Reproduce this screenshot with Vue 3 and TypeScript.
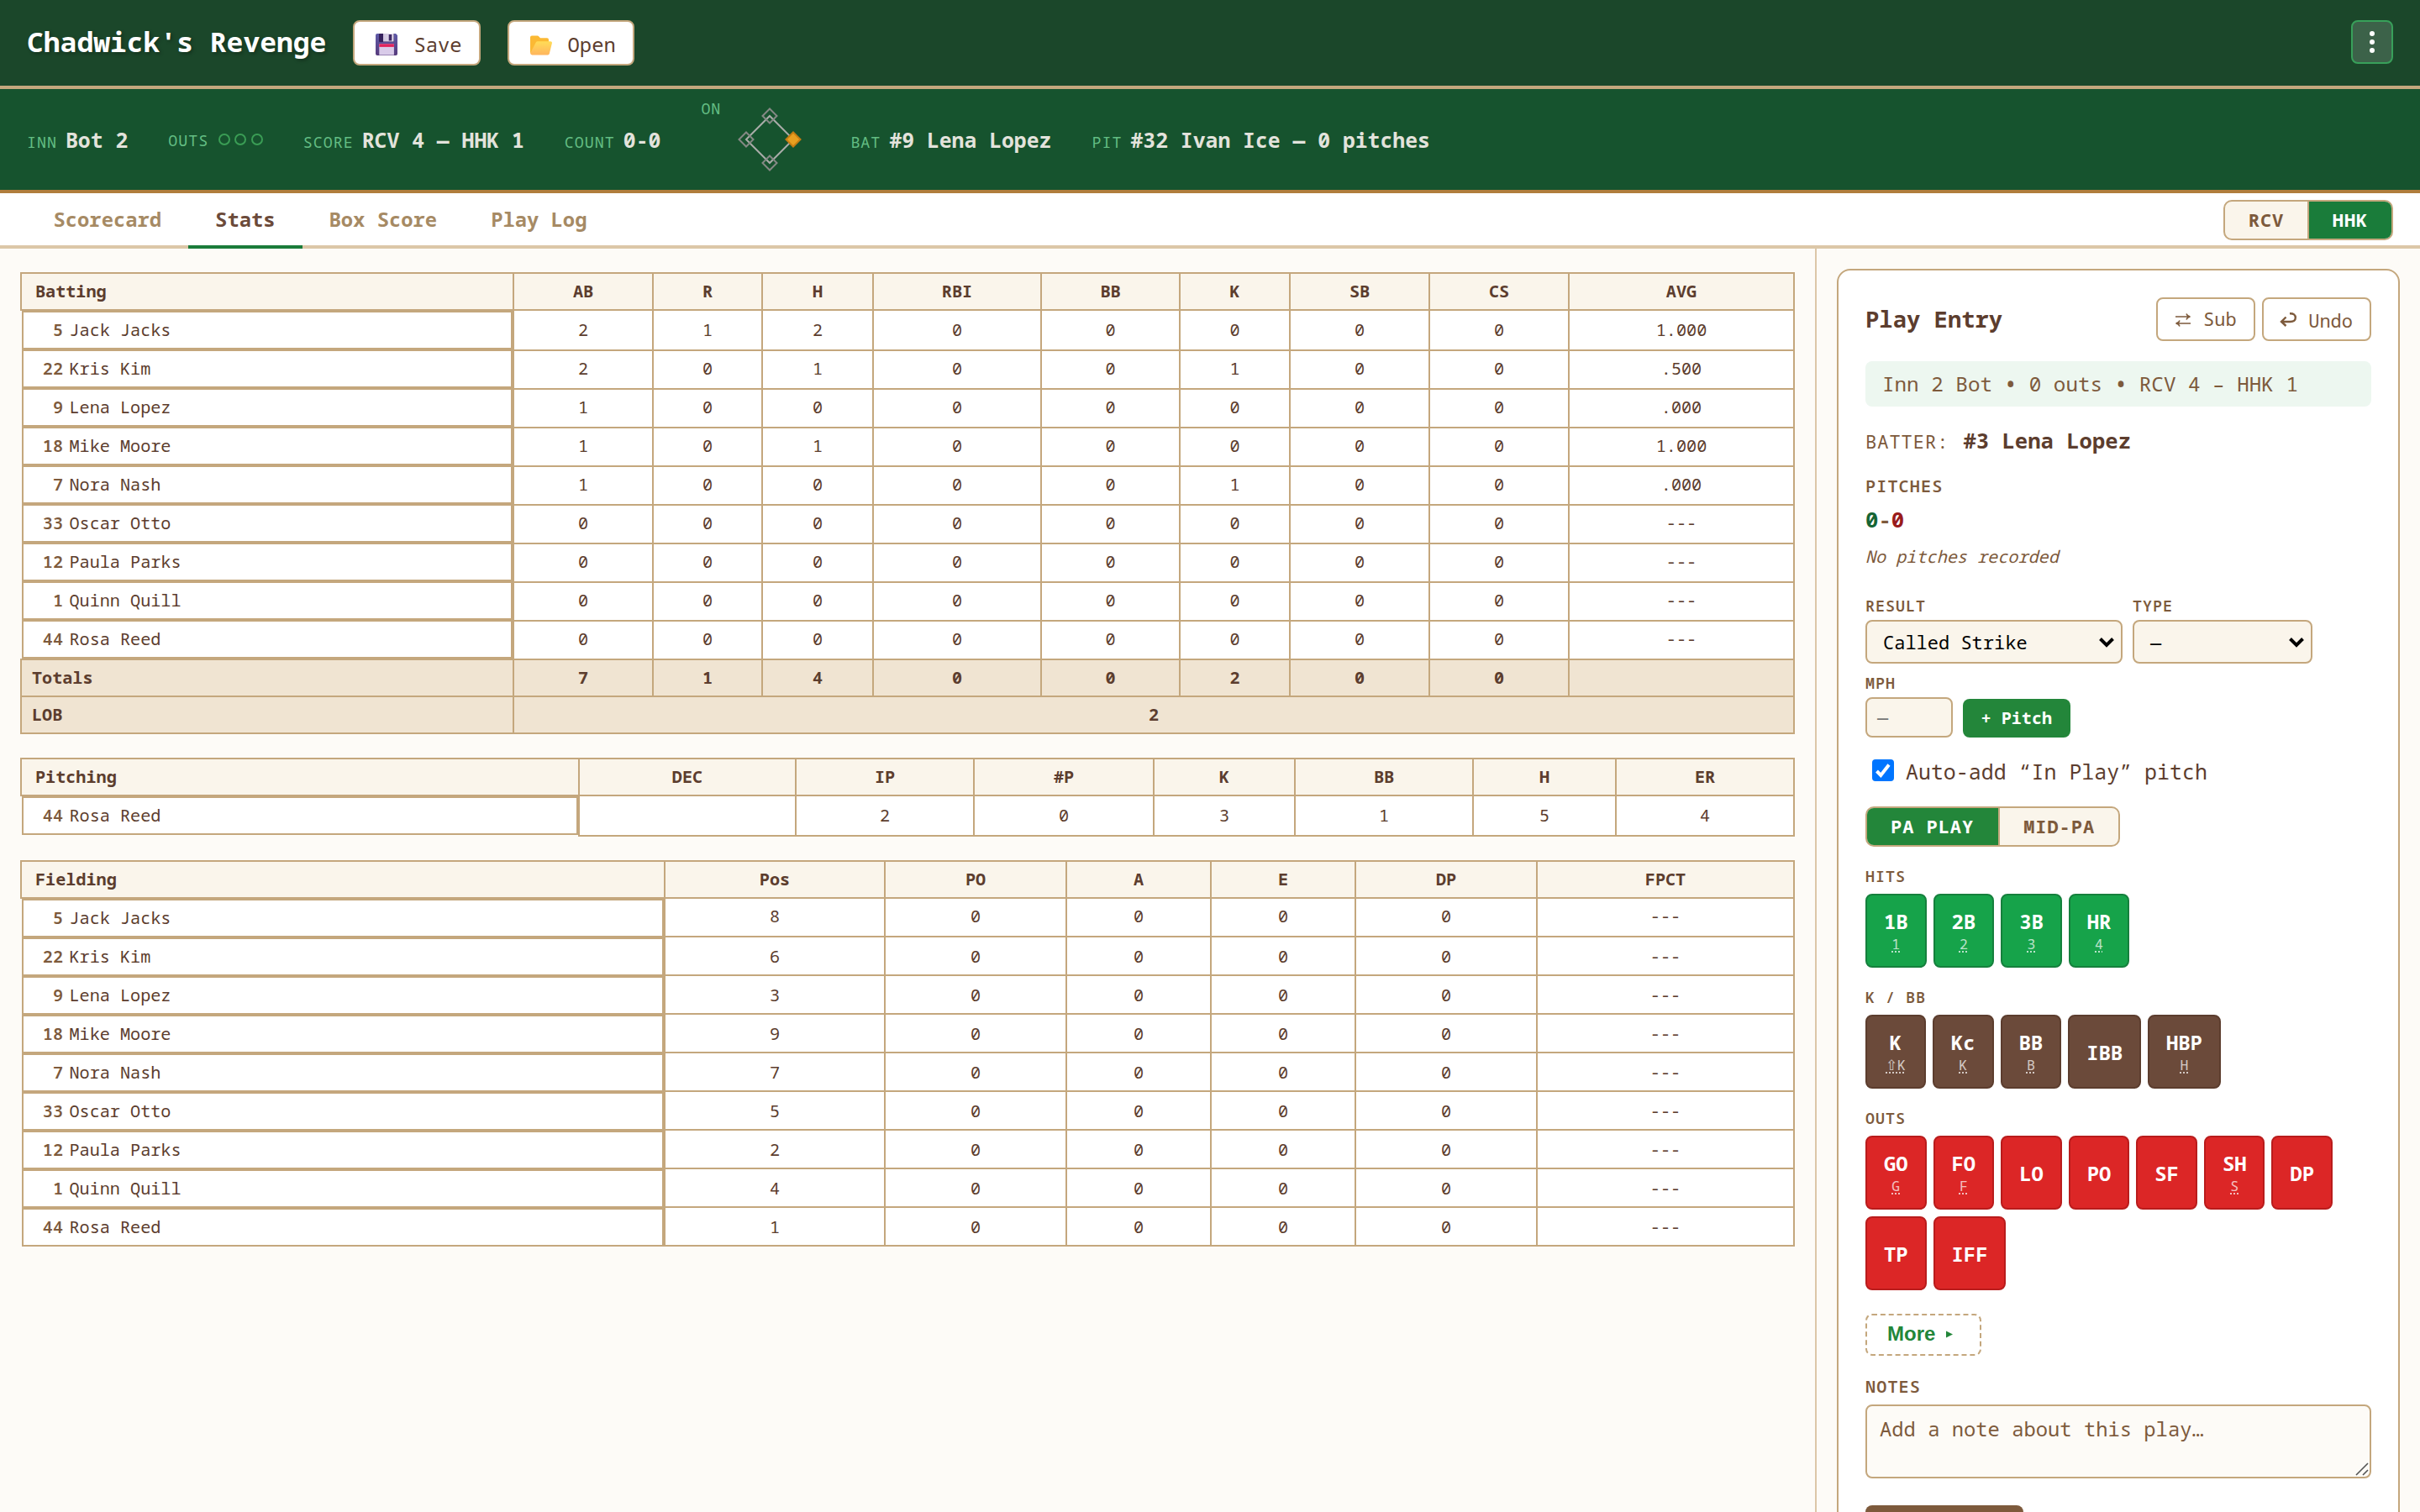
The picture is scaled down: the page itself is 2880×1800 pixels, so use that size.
<script setup lang="ts">
interface Row {
  num: string
  name: string
  cells: string[]
}
interface PlayButton {
  label: string
  key?: string
}
interface PlayGroup {
  title: string
  tone: string
  buttons: PlayButton[]
}

const row = (num: string, name: string, cells: string): Row => ({ num, name, cells: cells.split(' ') })

const battingHead = ['AB', 'R', 'H', 'RBI', 'BB', 'K', 'SB', 'CS', 'AVG']
const batting: Row[] = [
  row('5', 'Jack Jacks', '2 1 2 0 0 0 0 0 1.000'),
  row('22', 'Kris Kim', '2 0 1 0 0 1 0 0 .500'),
  row('9', 'Lena Lopez', '1 0 0 0 0 0 0 0 .000'),
  row('18', 'Mike Moore', '1 0 1 0 0 0 0 0 1.000'),
  row('7', 'Nora Nash', '1 0 0 0 0 1 0 0 .000'),
  row('33', 'Oscar Otto', '0 0 0 0 0 0 0 0 ---'),
  row('12', 'Paula Parks', '0 0 0 0 0 0 0 0 ---'),
  row('1', 'Quinn Quill', '0 0 0 0 0 0 0 0 ---'),
  row('44', 'Rosa Reed', '0 0 0 0 0 0 0 0 ---'),
]
const totals = ['7', '1', '4', '0', '0', '2', '0', '0', '']

const pitchingHead = ['DEC', 'IP', '#P', 'K', 'BB', 'H', 'ER']
const pitching: Row[] = [{ num: '44', name: 'Rosa Reed', cells: ['', '2', '0', '3', '1', '5', '4'] }]

const fieldingHead = ['Pos', 'PO', 'A', 'E', 'DP', 'FPCT']
const positions = ['8', '6', '3', '9', '7', '5', '2', '4', '1']
const fielding: Row[] = batting.map((b, i) => row(b.num, b.name, `${positions[i]} 0 0 0 0 ---`))

const groups: PlayGroup[] = [
  {
    title: 'HITS',
    tone: 'hit',
    buttons: [
      { label: '1B', key: '1' },
      { label: '2B', key: '2' },
      { label: '3B', key: '3' },
      { label: 'HR', key: '4' },
    ],
  },
  {
    title: 'K / BB',
    tone: 'walk',
    buttons: [
      { label: 'K', key: '⇧K' },
      { label: 'Kc', key: 'K' },
      { label: 'BB', key: 'B' },
      { label: 'IBB' },
      { label: 'HBP', key: 'H' },
    ],
  },
  {
    title: 'OUTS',
    tone: 'out',
    buttons: [
      { label: 'GO', key: 'G' },
      { label: 'FO', key: 'F' },
      { label: 'LO' },
      { label: 'PO' },
      { label: 'SF' },
      { label: 'SH', key: 'S' },
      { label: 'DP' },
      { label: 'TP' },
      { label: 'IFF' },
    ],
  },
]
const tabs = ['Scorecard', 'Stats', 'Box Score', 'Play Log']
</script>

<template>
  <div class="app">
    <header class="top">
      <h1>Chadwick's Revenge</h1>
      <button class="file-btn">
        <svg class="floppy" viewBox="0 0 26 26">
          <defs>
            <linearGradient id="fl" x1="0" y1="0" x2="0" y2="1">
              <stop offset="0" stop-color="#5f5ba8" />
              <stop offset="1" stop-color="#563a7c" />
            </linearGradient>
            <linearGradient id="fm" x1="0" y1="0" x2="1" y2="0">
              <stop offset="0" stop-color="#cfc4de" />
              <stop offset="1" stop-color="#e9e2f2" />
            </linearGradient>
          </defs>
          <path d="M2 0H24L26 2V24a2 2 0 0 1-2 2H2a2 2 0 0 1-2-2V2a2 2 0 0 1 2-2z" fill="url(#fl)" />
          <rect x="4" y="0" width="18" height="10" rx="1" fill="#35215c" />
          <rect x="9" y="0" width="12.5" height="9.5" fill="url(#fm)" />
          <rect x="15.7" y="1" width="3.6" height="7.5" fill="#3f2a66" />
          <rect x="4.3" y="12.3" width="17.6" height="13.2" fill="#d9cbe9" />
          <rect x="4.3" y="12.3" width="17.6" height="3.6" fill="#e0245e" />
        </svg>
        <span>Save</span>
      </button>
      <button class="file-btn">
        <svg class="folder" viewBox="0 0 26 24">
          <defs>
            <linearGradient id="fo" x1="0" y1="0" x2="0" y2="1">
              <stop offset="0" stop-color="#ffdc57" />
              <stop offset="1" stop-color="#ffb55e" />
            </linearGradient>
          </defs>
          <path d="M0 2.5A2 2 0 0 1 2 .5H8.6a2 2 0 0 1 1.5.7L12 3.2H20a2 2 0 0 1 2 2V14L4 22H2a2 2 0 0 1-2-2z" fill="#fbb934" />
          <path d="M6.6 8.8A2 2 0 0 1 8.500 7.300H24a1.900 1.900 0 0 1 1.900 2.300L22.800 21.900A2 2 0 0 1 20.900 23.400H2.200A2.100 2.100 0 0 1 .3 21z" fill="url(#fo)" />
        </svg>
        <span>Open</span>
      </button>
      <button class="menu"><i></i><i></i><i></i></button>
    </header>

    <section class="status">
      <div class="item"><span class="lbl">INN</span><b>Bot 2</b></div>
      <div class="item outs">
        <span class="lbl">OUTS</span>
        <span class="dots"><i></i><i></i><i></i></span>
      </div>
      <div class="item"><span class="lbl">SCORE</span><b>RCV 4 — HHK 1</b></div>
      <div class="item"><span class="lbl">COUNT</span><b>0-0</b></div>
      <div class="item bases">
        <span class="lbl">ON</span>
        <svg width="96" height="96" viewBox="-48 -48 96 96" fill="none" stroke-width="2">
          <path d="M0-28L28 0L0 28L-28 0z" stroke="#a9aca9" />
          <path d="M0-36.500L8.500-28L0-19.500L-8.500-28z" stroke="#858985" />
          <path d="M-28-8.500L-19.500 0L-28 8.500L-36.500 0z" stroke="#858985" />
          <path d="M0 19.500L8.500 28L0 36.500L-8.500 28z" stroke="#858985" />
          <path d="M28-8.500L36.500 0L28 8.500L19.500 0z" fill="#e8a020" stroke="#c77d12" />
        </svg>
      </div>
      <div class="item"><span class="lbl">BAT</span><b>#9 Lena Lopez</b></div>
      <div class="item"><span class="lbl">PIT</span><b>#32 Ivan Ice — 0 pitches</b></div>
    </section>

    <nav class="tabs">
      <a v-for="t in tabs" :key="t" :class="{ active: t === 'Stats' }">{{ t }}</a>
      <div class="seg team"><span>RCV</span><span class="on">HHK</span></div>
    </nav>

    <main>
      <section class="stats">
        <table class="batting">
          <thead>
            <tr>
              <th>Batting</th>
              <th v-for="h in battingHead" :key="h">{{ h }}</th>
            </tr>
          </thead>
          <tbody>
            <tr v-for="r in batting" :key="r.num">
              <td class="player"><div><b>{{ r.num }}</b>{{ r.name }}</div></td>
              <td v-for="(c, i) in r.cells" :key="i">{{ c }}</td>
            </tr>
          </tbody>
          <tfoot>
            <tr>
              <th>Totals</th>
              <th v-for="(c, i) in totals" :key="i">{{ c }}</th>
            </tr>
            <tr class="lob">
              <th>LOB</th>
              <th>2</th>
            </tr>
          </tfoot>
        </table>

        <table class="pitching">
          <thead>
            <tr>
              <th>Pitching</th>
              <th v-for="h in pitchingHead" :key="h">{{ h }}</th>
            </tr>
          </thead>
          <tbody>
            <tr v-for="r in pitching" :key="r.num">
              <td class="player"><div><b>{{ r.num }}</b>{{ r.name }}</div></td>
              <td v-for="(c, i) in r.cells" :key="i">{{ c }}</td>
            </tr>
          </tbody>
        </table>

        <table class="fielding">
          <thead>
            <tr>
              <th>Fielding</th>
              <th v-for="h in fieldingHead" :key="h">{{ h }}</th>
            </tr>
          </thead>
          <tbody>
            <tr v-for="r in fielding" :key="r.num">
              <td class="player"><div><b>{{ r.num }}</b>{{ r.name }}</div></td>
              <td v-for="(c, i) in r.cells" :key="i">{{ c }}</td>
            </tr>
          </tbody>
        </table>
      </section>

      <aside>
        <div class="card">
          <div class="card-head">
            <h2>Play Entry</h2>
            <button class="ghost sub">
              <svg width="20" height="16" viewBox="0 0 20 16" fill="none" stroke="currentColor" stroke-width="1.500">
                <path d="M1 4H18M14 .5Q15 3.500 18.500 4Q15 4.500 14 7.500M19 12H2M6 8.500Q5 11.500 1.500 12Q5 12.500 6 15.500" />
              </svg>
              <span>Sub</span>
            </button>
            <button class="ghost undo">
              <svg width="21" height="17" viewBox="0 0 21 17" fill="none" stroke="currentColor" stroke-width="2.400">
                <path d="M12 1.300Q18.800 1 18.800 6.300Q18.800 11 12.500 11H2M7.500 5.500L2 11L7.500 16" />
              </svg>
              <span>Undo</span>
            </button>
          </div>
          <div class="situation">Inn 2 Bot <b>•</b> 0 outs <b>•</b> RCV 4 – HHK 1</div>
          <div class="batter"><span>BATTER:</span><b>#3 Lena Lopez</b></div>
          <div class="heading pitches">PITCHES</div>
          <div class="count"><span class="balls">0</span>-<span class="strikes">0</span></div>
          <div class="empty">No pitches recorded</div>
          <div class="fields">
            <div class="field">
              <label>RESULT</label>
              <div class="select result">
                Called Strike
                <svg width="20" height="14" viewBox="0 0 20 14"><path d="M2.500 2.500L10 10L17.500 2.500" fill="none" stroke="#000" stroke-width="4" /></svg>
              </div>
            </div>
            <div class="field">
              <label>TYPE</label>
              <div class="select type">
                —
                <svg width="20" height="14" viewBox="0 0 20 14"><path d="M2.500 2.500L10 10L17.500 2.500" fill="none" stroke="#000" stroke-width="4" /></svg>
              </div>
            </div>
          </div>
          <div class="fields second">
            <div class="field">
              <label>MPH</label>
              <div class="mph">—</div>
            </div>
            <button class="add">+ Pitch</button>
          </div>
          <div class="auto">
            <span class="check">
              <svg width="26" height="26" viewBox="0 0 26 26"><path d="M5.500 14L10.300 19L20 6.500" fill="none" stroke="#fff" stroke-width="4" /></svg>
            </span>
            <span>Auto-add “In Play” pitch</span>
          </div>
          <div class="seg mode"><span class="on">PA PLAY</span><span>MID-PA</span></div>

          <div v-for="g in groups" :key="g.title" class="group" :class="g.tone">
            <div class="group-title">{{ g.title }}</div>
            <div class="buttons">
              <button v-for="b in g.buttons" :key="b.label">
                <b>{{ b.label }}</b>
                <span v-if="b.key" class="key">{{ b.key }}</span>
              </button>
            </div>
          </div>

          <button class="more">More<svg width="8" height="9" viewBox="0 0 8 9"><path d="M0 .5L8 4.500L0 8.500z" fill="currentColor" /></svg></button>
          <div class="heading notes">NOTES</div>
          <div class="note">
            Add a note about this play…
            <svg width="16" height="16" viewBox="0 0 16 16"><path d="M1 15L15 1M9 15L15 9" fill="none" stroke="#555" stroke-width="1.600" /></svg>
          </div>
          <div class="submit"></div>
        </div>
      </aside>
    </main>
  </div>
</template>

<style>
body {
  margin: 0;
  background: #fdfbf7;
}
</style>

<style scoped>
* {
  box-sizing: border-box;
}
.app {
  width: 2880px;
  height: 1800px;
  overflow: hidden;
  background: #fdfbf7;
  color: #5c3d2e;
  font-family: 'Noto Sans Mono', 'DejaVu Sans Mono', monospace;
  display: flex;
  flex-direction: column;
}
button {
  font: inherit;
  color: inherit;
  margin: 0;
  padding: 0;
}
h1,
h2 {
  margin: 0;
}

/* header */
.top {
  flex: none;
  height: 106px;
  border-bottom: 4px solid #c4a77d;
  background: #1b472a;
  display: flex;
  align-items: center;
  gap: 32px;
  padding: 0 32px;
}
.top h1 {
  font-size: 33px;
  line-height: 44px;
  padding-bottom: 3px;
  color: #fff;
  text-shadow: 2px 2px 4px rgba(0, 0, 0, 0.3);
  white-space: pre;
}
.file-btn {
  height: 54px;
  border: 2px solid #c4a77d;
  border-radius: 8px;
  background: #fff;
  font-size: 23.82px;
  line-height: 34px;
  padding: 4px 20px 0;
  display: flex;
  align-items: center;
}
.file-btn svg {
  width: 26px;
  height: 26px;
  margin: 0 19px 0 5px;
}
.file-btn .folder {
  margin-top: 2px;
}
.menu {
  margin: 0 0 2px auto;
  width: 50px;
  height: 52px;
  border: 2px solid #38a05a;
  border-radius: 8px;
  background: rgba(255, 255, 255, 0.15);
  display: flex;
  flex-direction: column;
  align-items: center;
  justify-content: center;
  gap: 4px;
}
.menu i {
  width: 6px;
  height: 6px;
  border-radius: 50%;
  background: #fff;
}

/* status bar */
.status {
  flex: none;
  height: 124px;
  border-bottom: 4px solid #b07d3c;
  background: #16532e;
  display: flex;
  align-items: center;
  gap: 48px;
  padding: 0 32px;
}
.item {
  display: flex;
  align-items: baseline;
  gap: 10px;
  padding-top: 1px;
  white-space: pre;
}
.item b {
  font-size: 24.75px;
  line-height: 31px;
  color: #e3e3dc;
}
.lbl {
  font-size: 18.33px;
  line-height: 21px;
  letter-spacing: 1px;
  color: #63bd83;
}
.item.outs {
  align-items: center;
}
.dots {
  display: flex;
  gap: 5.500px;
  margin: 0 0 1px 1.500px;
}
.dots i {
  width: 14px;
  height: 14px;
  border: 2px solid #3a9d55;
  border-radius: 50%;
}
.item.bases {
  align-items: flex-start;
  padding: 0;
}

/* tabs */
.tabs {
  flex: none;
  height: 66px;
  border-bottom: 4px solid #dcc7a8;
  background: #fff;
  display: flex;
  padding: 0 32px 0 31.500px;
}
.tabs a {
  height: 66px;
  padding: 14px 32px;
  font-size: 23.82px;
  line-height: 34px;
  font-weight: 700;
  color: #a68a64;
  border-bottom: 4px solid transparent;
}
.tabs a.active {
  color: #6b4a3a;
  border-color: #1a7c3a;
}
.seg {
  display: flex;
  width: max-content;
  height: 48px;
  border: 2px solid #c4a77d;
  border-radius: 10px;
  overflow: hidden;
  background: #faf5eb;
  color: #7d5a3c;
  font-size: 22px;
  line-height: 42px;
  font-weight: 700;
  letter-spacing: 0.960px;
}
.seg span {
  padding: 0 28px;
}
.seg span + span {
  border-left: 2px solid #c4a77d;
}
.seg .on {
  background: #23863a;
  color: #fff;
}
.seg.team {
  margin: 8px 0 0 auto;
}
.seg.team span {
  padding: 0 27.750px;
}
.seg.team .on {
  background: #1a7c3a;
}

/* stat tables */
main {
  flex: 1;
  min-height: 0;
  display: flex;
}
.stats {
  width: 2160px;
  padding: 28px 24px;
  display: flex;
  flex-direction: column;
  gap: 28px;
}
table,
thead,
tbody,
tfoot {
  display: block;
}
tr {
  display: grid;
}
.batting tr {
  grid-template-columns: 588px 166px 130px 132px 200px 165px 131px 166px 166px 268px;
}
.pitching tr {
  grid-template-columns: 666px 258px 212px 214px 168px 212px 170px 212px;
}
.fielding tr {
  grid-template-columns: 768px 262px 216px 172px 172px 216px 306px;
}
.batting tr.lob {
  grid-template-columns: 588px 1524px;
}
table {
  width: 2112px;
  font-size: 20.16px;
}
th,
td {
  display: block;
  padding: 0;
  text-align: center;
  border: 0 solid #c4a77d;
  border-right-width: 2px;
  border-bottom-width: 2px;
}
thead tr {
  border-top: 2px solid #c4a77d;
}
th {
  height: 44px;
  line-height: 40px;
  background: #faf5eb;
}
th:first-child {
  text-align: left;
  border-left-width: 2px;
  padding-left: 16px;
}
tfoot th {
  background: #f0e4d2;
}
tfoot th:first-child {
  padding-left: 12px;
}
tfoot tr:first-child {
  margin-top: -2px;
  border-top: 2px solid #c4a77d;
}
td {
  height: 46px;
  line-height: 40px;
  background: #fff;
}
tbody tr:first-child td {
  height: 48px;
  line-height: 44px;
}
td.player {
  background: none;
  border-bottom: 0;
  padding-left: 2px;
}
td.player div {
  height: 46px;
  margin-top: -2px;
  border: 2px solid #c4a77d;
  background: #fff;
  text-align: left;
  line-height: 40px;
  white-space: pre;
  display: flex;
}
tbody tr:first-child td.player div {
  margin-top: 0;
}
td.player b {
  width: 47px;
  margin-right: 7.500px;
  text-align: right;
  font-weight: 600;
  color: #7d5a3c;
}
.fielding tbody tr td:not(.player),
.fielding tbody tr:first-child td {
  height: 46px;
  line-height: 44px;
}
.fielding tbody tr:first-child td:not(.player) {
  line-height: 40px;
}
.fielding td.player div {
  margin-top: 0;
}

/* play entry */
aside {
  width: 720px;
  border-left: 2px solid #dcc7a8;
  padding: 24px;
}
.card {
  height: 1600px;
  border: 2px solid #c4a77d;
  border-radius: 16px;
  background: #fff;
  padding: 32px;
  color: #7d5a3c;
}
.card-head {
  display: flex;
  align-items: center;
  gap: 8px;
}
h2 {
  margin-right: auto;
  font-size: 27.2px;
  line-height: 36px;
  padding-bottom: 1px;
  color: #5c3d2e;
}
.ghost {
  height: 52px;
  border: 2px solid #c4a77d;
  border-radius: 8px;
  background: #fff;
  font-size: 22px;
  line-height: 30px;
  display: flex;
  align-items: center;
  gap: 13px;
  padding: 0 20px 2px;
}
.ghost.sub {
  gap: 14px;
  padding-right: 20.500px;
}
.ghost.sub svg {
  margin-top: 3px;
}
.ghost.undo {
  padding: 2px 20px 0;
}
.ghost.undo svg {
  margin: -1px 0 0 -1px;
}
.situation {
  margin-top: 24px;
  height: 54px;
  line-height: 54px;
  padding: 0 20px;
  border-radius: 8px;
  background: #edf7f0;
  font-size: 24.28px;
  white-space: pre;
}
.batter {
  margin-top: 24px;
  height: 33px;
  display: flex;
  align-items: baseline;
  gap: 17px;
  font-size: 22px;
  letter-spacing: 1px;
}
.batter b {
  font-size: 25.6px;
  line-height: 33px;
  letter-spacing: 0;
  color: #5c3d2e;
}
.heading {
  font-size: 20.16px;
  line-height: 28px;
  font-weight: 600;
  letter-spacing: 1.1px;
}
.pitches {
  margin-top: 23px;
}
.count {
  margin-top: 10px;
  font-size: 25.66px;
  line-height: 33px;
  font-weight: 700;
}
.balls {
  color: #166534;
}
.strikes {
  color: #991b1b;
}
.empty {
  margin-top: 13px;
  font-size: 20.16px;
  line-height: 28px;
  font-style: italic;
}
.fields {
  margin-top: 33px;
  display: flex;
  align-items: flex-end;
  gap: 12px;
}
.fields.second {
  margin-top: 11px;
}
label,
.group-title {
  display: block;
  font-size: 18.33px;
  line-height: 23px;
  font-weight: 600;
  letter-spacing: 1px;
}
.select,
.mph {
  margin-top: 6px;
  border: 2px solid #c4a77d;
  border-radius: 8px;
  background: #faf5eb;
  font-size: 22px;
}
.select {
  height: 52px;
  line-height: 46px;
  padding: 0 7px 0 19px;
  color: #000;
  display: flex;
  align-items: center;
  justify-content: space-between;
}
.result {
  width: 306px;
}
.type {
  width: 214px;
}
.select svg {
  margin-top: 2px;
}
.mph {
  width: 104px;
  height: 48px;
  line-height: 42px;
  padding-left: 12px;
  color: #757575;
}
.add {
  height: 46px;
  padding: 0 21.500px 2px;
  border: 0;
  border-radius: 8px;
  background: #23863a;
  color: #fff;
  font-size: 20.16px;
  font-weight: 700;
}
.auto {
  margin-top: 23px;
  height: 35px;
  display: flex;
  align-items: center;
  gap: 14px;
  padding-left: 8px;
  font-size: 24.93px;
  line-height: 35px;
  color: #5c3d2e;
}
.check {
  width: 26px;
  height: 26px;
  margin-bottom: 3px;
  border-radius: 4px;
  background: #0075ff;
}
.check svg {
  display: block;
}
.seg.mode {
  margin-top: 24px;
}
.seg.mode .on {
  padding: 0 29px 0 28px;
}
.group {
  margin-top: 23px;
}
.buttons {
  margin-top: 10px;
  display: flex;
  flex-wrap: wrap;
  gap: 8px;
}
.buttons button {
  min-width: 72px;
  height: 88px;
  border: 2px solid;
  border-radius: 8px;
  padding: 2px 20px 0;
  color: #fff;
  display: flex;
  flex-direction: column;
  align-items: center;
  justify-content: center;
}
.buttons b {
  font-size: 23.82px;
  line-height: 30px;
}
.key {
  margin: 1px 0 2px;
  height: 21px;
  font-family: 'Noto Sans Mono', serif;
  font-size: 16.5px;
  line-height: 21px;
  opacity: 0.7;
  text-decoration: underline dotted 2px;
  text-underline-offset: 2px;
  text-decoration-skip-ink: none;
}
.hit button {
  background: #16a34a;
  border-color: #15803d;
}
.walk button {
  background: #6b4a3a;
  border-color: #5c3d2e;
}
.out button {
  background: #dc2626;
  border-color: #b91c1c;
}
.more {
  margin-top: 28px;
  width: 138px;
  height: 50px;
  border: 2px dashed #c4a77d;
  border-radius: 8px;
  background: #fff;
  color: #23863a;
  font: 700 24px/30px 'Liberation Sans', sans-serif;
  display: flex;
  align-items: center;
  gap: 13px;
  padding: 0 0 3px 24px;
}
.more svg {
  margin-top: 1px;
}
.notes {
  margin-top: 22px;
}
.note {
  position: relative;
  margin-top: 8px;
  height: 88px;
  border: 2px solid #c4a77d;
  border-radius: 8px;
  background: #fdfbf7;
  padding: 10px 15px;
  font-size: 23.82px;
  line-height: 34px;
}
.note svg {
  position: absolute;
  right: 1px;
  bottom: 1px;
}
.submit {
  margin-top: 32px;
  width: 188px;
  height: 52px;
  border-radius: 8px;
  background: #7d5a3c;
}
</style>
